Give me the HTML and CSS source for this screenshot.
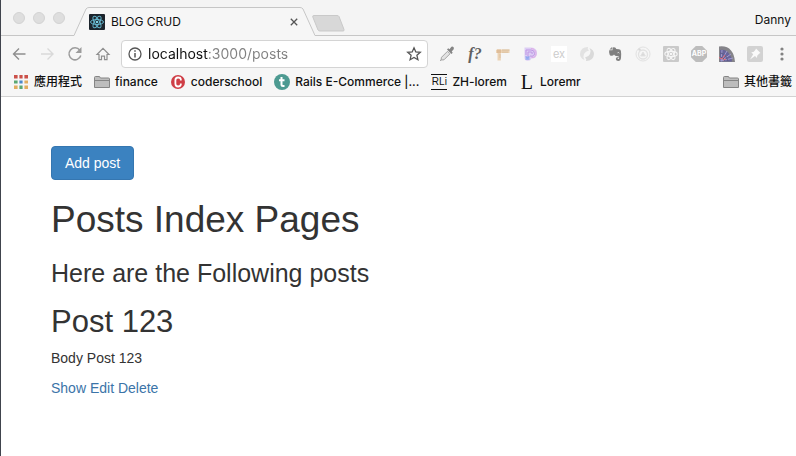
FILE: index.html
```html
<!DOCTYPE html>
<html lang="en">
<head>
<meta charset="utf-8">
<title>BLOG CRUD</title>
<link rel="stylesheet" href="styles.css">
</head>
<body>
<div class="window">
  <header class="chrome">
    <div class="tabstrip">
      <div class="lights"><span class="light"></span><span class="light"></span><span class="light"></span></div>
      <div class="tab">
        <svg class="tab-edge" width="15" height="29" viewBox="0 0 15 29"><path d="M0 28.5 12 2Q13 .5 15 .5V29H0z" fill="#f6f6f6"/><path d="M0 28.500 12 2Q13 .5 15 .5" fill="none" stroke="#c6c6c6"/></svg>
        <div class="tab-body">
          <svg width="16" height="16" viewBox="0 0 16 16"><rect width="16" height="16" rx="1" fill="#1c242c"/><g fill="none" stroke="#65b5cc"><ellipse cx="8" cy="8" rx="6.500" ry="2.500"/><ellipse cx="8" cy="8" rx="6.500" ry="2.500" transform="rotate(60 8 8)"/><ellipse cx="8" cy="8" rx="6.500" ry="2.500" transform="rotate(120 8 8)"/></g><circle cx="8" cy="8" r="1.300" fill="#7ad0e6"/></svg>
          <span class="tab-title">BLOG CRUD</span>
          <button class="tab-close" aria-label="Close tab"><svg width="8" height="8" viewBox="0 0 8 8"><path d="M.8.8l6.400 6.400M7.200.8.8 7.200" stroke="#555" stroke-width="1.300"/></svg></button>
        </div>
        <svg class="tab-edge" width="15" height="29" viewBox="0 0 15 29"><path d="M15 28.500 3 2Q2 .5 0 .5V29h15z" fill="#f6f6f6"/><path d="M15 28.500 3 2Q2 .5 0 .5" fill="none" stroke="#c6c6c6"/></svg>
      </div>
      <button class="new-tab" aria-label="New tab"><svg width="33" height="17" viewBox="0 0 33 17"><path d="M2 .5h23q1.500 0 2 1l5 13q.5 1.500-1 1.500H8q-1.500 0-2-1L.8 2Q.3.500 2 .5z" fill="#d8d8d8" stroke="#c9c9c9"/></svg></button>
      <button class="profile">Danny</button>
    </div>
    <div class="toolbar">
      <button class="tool" aria-label="Back"><svg width="16" height="16" viewBox="0 0 16 16"><path d="M14.500 8H2.500M8 2.500 2.500 8 8 13.500" fill="none" stroke="#8f8f8f" stroke-width="1.400"/></svg></button>
      <button class="tool" aria-label="Forward"><svg width="16" height="16" viewBox="0 0 16 16"><path d="M2 8h12M8.500 2.500 14 8l-5.500 5.500" fill="none" stroke="#d9d9d9" stroke-width="1.400"/></svg></button>
      <button class="tool" aria-label="Reload"><svg width="16" height="16" viewBox="0 0 16 16"><path d="M12.800 4.200A6 6 0 1 0 13.800 9.500" fill="none" stroke="#9c9c9c" stroke-width="1.500"/><path d="M14.500 1v6h-6z" fill="#9c9c9c"/></svg></button>
      <button class="tool" aria-label="Home"><svg width="16" height="16" viewBox="0 0 16 16"><path d="M2 8.500 8 2.300l6 6.200h-2v5.200H9.500v-3.500h-3v3.500H4V8.500z" fill="none" stroke="#8f8f8f" stroke-width="1.200"/></svg></button>
      <div class="omnibox">
        <svg width="14" height="14" viewBox="0 0 14 14"><circle cx="7" cy="7" r="6" fill="none" stroke="#555" stroke-width="1.300"/><path d="M7 6v4.500M7 3.300v1.500" stroke="#555" stroke-width="1.500"/></svg>
        <input class="url" type="text" aria-label="Address" value="localhost:3000/posts">
        <button class="star" aria-label="Bookmark this page"><svg width="16" height="16" viewBox="0 0 16 16"><path d="m8 1.800 1.800 4.100 4.500.4-3.400 3 1 4.400L8 11.400l-3.900 2.300 1-4.400-3.400-3 4.500-.4z" fill="none" stroke="#555" stroke-width="1.300"/></svg></button>
      </div>
      <div class="extensions">
        <button class="tool" aria-label="Color picker"><svg width="16" height="16" viewBox="0 0 16 16"><path d="M2 14 2.500 11.300l6-6 2.500 2.500-6 6z" fill="#e2e2e2" stroke="#a4a4a4"/><path d="M8 3.500 12.500 8l1.200-1.200-1-1.300 2-2.200Q15.500 1.500 14 .8 12.800.200 11.800 1.500L10.500 3.300 9.200 2.300z" fill="#858585"/><path d="M1 15l1.500-1.500" stroke="#aaa"/></svg></button>
        <button class="tool font-finder" aria-label="Font finder">f?</button>
        <button class="tool" aria-label="Ruler"><svg width="16" height="16" viewBox="0 0 16 16"><path d="M2 3.500h12.500V7H5.800v7.500H2.500V7H1V4z" fill="#ecd3b5"/><path d="M2 3.500h4V7H2z" fill="#dfbd99"/><path d="M7 4h7.500M8 7V5.500m2 1.500V5.500M12 7V5.500M5.800 9H4.300m1.500 2H4.300" stroke="#cfb18e" stroke-width=".7"/></svg></button>
        <button class="tool" aria-label="Pattern"><svg width="16" height="16" viewBox="0 0 16 16"><path d="M1.500 1.500h6Q14 1.500 14 7q0 5.500-5.500 5.500Q7.500 15 4.500 14.800 1.500 14.500 1.500 12z" fill="#dccdf4"/><path d="M3 9V4h5q3.500 0 3.500 3.500T7 10M5 11V6h3q2 0 1 2" fill="none" stroke="#bf97e4"/><path d="M8 2.500q5 .5 5 5T8.500 11.500" fill="none" stroke="#e0a9e4"/><path d="M2.500 10.500q2 2 4 0M2.500 13h4" stroke="#91aaf0" stroke-width="1.500" fill="none"/></svg></button>
        <button class="tool" aria-label="Express"><span class="ex">ex</span></button>
        <button class="tool" aria-label="Sync"><svg width="16" height="16" viewBox="0 0 16 16"><path d="M9 1Q1.500 1 1 8q0 4 4.500 6Q3.500 11 5 8t5-3.500Q8 3 9 1z" fill="#e2e2e2"/><path d="M7 15q7.500 0 8-7 0-4-4.500-6 2 3 .5 6t-5 3.500Q8 13 7 15z" fill="#dadada"/></svg></button>
        <button class="tool" aria-label="Evernote"><svg width="16" height="16" viewBox="0 0 16 16"><path d="M5.500 1.500v2.700H2.200Q1.800 6 2.600 8.500q.3 1.400 1.800 1.300Q6.500 9.800 7 8.500 8 10 9.500 10l1.500.2q1.300.3 1.200 1.800 0 1-.9 1-.8-.2-.7-1h1V11Q8.800 10.800 8.800 13q.2 2 2.500 2 2.400 0 2.700-3 .5-4-.1-7-.2-1.500-2-1.700L9.300 3Q9 1.200 7 1.200z" fill="#808080"/><path d="M2.500 3.500 4.900 1.100v2.400z" fill="#808080"/><path d="M10.600 6.800q1-.8 1.700.3" stroke="#eee" fill="none"/></svg></button>
        <button class="tool" aria-label="Ring"><svg width="16" height="16" viewBox="0 0 16 16"><g fill="none" stroke="#e2e2e2"><circle cx="8" cy="8" r="7"/><circle cx="8" cy="8.500" r="4.500" stroke-width="1.300"/><path d="m8 6 2.300 4H5.700z" fill="#dadada"/></g><circle cx="4.500" cy="3.500" r="1.200" fill="#d8d8d8"/></svg></button>
        <button class="tool" aria-label="React tools"><svg width="16" height="16" viewBox="0 0 16 16"><rect width="16" height="16" rx="1" fill="#cacaca"/><g fill="none" stroke="#f6f6f6" stroke-width="1.100"><ellipse cx="8" cy="8" rx="6.200" ry="2.600"/><ellipse cx="8" cy="8" rx="6.200" ry="2.600" transform="rotate(60 8 8)"/><ellipse cx="8" cy="8" rx="6.200" ry="2.600" transform="rotate(120 8 8)"/></g><circle cx="8" cy="8" r="1.300" fill="#f6f6f6"/></svg></button>
        <button class="tool" aria-label="Adblock"><span class="abp">ABP</span></button>
        <button class="tool" aria-label="Radar"><svg width="16" height="16" viewBox="0 0 16 16"><path d="M0 .5Q8-.5 12 4.500q3.500 4 4 11.500H0z" fill="#858489"/><path d="M1 4q6-1 9 3.500 3 3.500 3 8H1z" fill="#68649b"/><path d="M2 15 3 4m-1 11L8 5M2 15l10-7M2 15l12-3" stroke="#a09ccf"/><path d="M1 7q5 0 8 8M1 11q4 0 5 4" fill="none" stroke="#5d5b86"/><path d="M0 11.500 3 13l3-4M4 14l3-1" stroke="#e36b7b" fill="none"/></svg></button>
        <button class="tool" aria-label="Pin"><svg width="16" height="16" viewBox="0 0 16 16"><rect width="16" height="16" rx="2" fill="#d2d2d2"/><path d="m9 2.500 4.500 4.500-1.200.4-2.100 2.300-.2 2.300-2-2L3 13.500 6.200 8.200 4.200 6.200l2.300-.3 2-2.100z" fill="#fafafa"/></svg></button>
        <button class="tool menu" aria-label="Menu"><svg width="4" height="16" viewBox="0 0 4 16"><g fill="#828282"><circle cx="2" cy="3" r="1.600"/><circle cx="2" cy="8" r="1.600"/><circle cx="2" cy="13" r="1.600"/></g></svg></button>
      </div>
    </div>
    <nav class="bookmarks" aria-label="Bookmarks">
      <a href="#"><svg width="16" height="16" viewBox="0 0 16 16"><path d="M1 1h4v4H1zM6 1h4v4H6zM11 1h4v4h-4z" fill="#cb5049"/><path d="M1 6h4v4H1zM6 11h4v4H6z" fill="#5aa873"/><path d="M6 6h4v4H6z" fill="#4b88ca"/><path d="M1 11h4v4H1zM11 6h4v4h-4zM11 11h4v4h-4z" fill="#e1ad60"/><path d="M5.500 1v14M10.500 1v14M1 5.500h14M1 10.500h14" stroke="#f6f6f6" stroke-width="1.800"/></svg>應用程式</a>
      <a href="#"><svg width="16" height="16" viewBox="0 0 16 16"><path d="M.5 13.500v-10q0-1 1-1H5q1 0 1.200 1l.3.500h8q1 0 1 1v8.500z" fill="#bdbdbd" stroke="#858585"/><path d="M1 6.500h14" stroke="#858585"/></svg>finance</a>
      <a href="#"><svg width="16" height="16" viewBox="0 0 16 16"><circle cx="8" cy="8" r="7" fill="#cf3e46"/><path d="M10.800 6.500V5.200Q10.500 3.500 8 3.500q-2.600 0-2.600 2.700v3.600q0 2.700 2.600 2.700 2.500 0 2.800-1.800V9.500" stroke="#fff" stroke-width="1.800" fill="none"/></svg>coderschool</a>
      <a href="#"><svg width="16" height="16" viewBox="0 0 16 16"><circle cx="8" cy="8" r="8" fill="#4d9a91"/><path d="M7.500 3v7.500q0 1.500 1.500 1.500h1.500M5 6.200h5.500" stroke="#fff" stroke-width="2" fill="none"/></svg>Rails E-Commerce |...</a>
      <a href="#"><span class="rli">RLi</span>ZH-lorem</a>
      <a href="#"><span class="serif-l">L</span>Loremr</a>
      <a href="#" class="other"><svg width="16" height="16" viewBox="0 0 16 16"><path d="M.5 13.500v-10q0-1 1-1H5q1 0 1.200 1l.3.500h8q1 0 1 1v8.500z" fill="#bdbdbd" stroke="#858585"/><path d="M1 6.500h14" stroke="#858585"/></svg>其他書籤</a>
    </nav>
  </header>
  <main class="page">
    <button class="btn">Add post</button>
    <h1>Posts Index Pages</h1>
    <h3>Here are the Following posts</h3>
    <article>
      <h2>Post 123</h2>
      <p>Body Post 123</p>
      <p><a href="#">Show</a> <a href="#">Edit</a> <a href="#">Delete</a></p>
    </article>
  </main>
</div>
</body>
</html>
```
FILE: styles.css
```css
* { box-sizing: border-box; }
body {
  margin: 0;
  background: #fff;
  color: #333;
  font: 14px/20px "Liberation Sans", Arial, sans-serif;
}
button {
  border: 0;
  padding: 0;
  background: none;
  font: inherit;
  color: inherit;
}
svg { display: block; flex: none; }
.window { min-height: 100vh; border-left: 1px solid #40444d; }
.chrome {
  background: #f6f6f6;
  border-bottom: 1px solid #d2d2d2;
  color: #111;
  font: 12px/16px Inter, "Noto Sans CJK TC", sans-serif;
}
.tabstrip {
  display: flex;
  align-items: flex-end;
  height: 36px;
  background: linear-gradient(#c6c6c6, #c6c6c6) left bottom / 100% 1px no-repeat #f4f4f4;
}
.lights { display: flex; gap: 8px; padding: 0 4px 12px 12px; }
.light {
  width: 12px;
  height: 12px;
  border-radius: 50%;
  background: #dedede;
  border: 1px solid #d3d3d3;
}
.tab { display: flex; margin-left: 5px; }
.tab-body {
  display: flex;
  align-items: center;
  width: 211px;
  height: 29px;
  border-top: 1px solid #c6c6c6;
  background: #f6f6f6;
}
.tab-title { flex: 1; margin-left: 6px; }
.tab-close { padding: 2px; }
.new-tab { margin: 0 0 4px -3px; }
.profile { margin: 0 5px 8px auto; }
.toolbar { display: flex; align-items: center; padding: 4px 1px 0 4px; }
.tool {
  display: flex;
  align-items: center;
  justify-content: center;
  width: 28px;
  height: 28px;
}
.omnibox {
  display: flex;
  align-items: center;
  flex: 1;
  min-width: 0;
  height: 28px;
  margin: 0 5px 0 4px;
  padding: 0 5px 0 6px;
  background: #fff;
  border: 1px solid #d4d4d4;
  border-radius: 4px;
}
.url {
  flex: 1;
  min-width: 0;
  margin-left: 6px;
  padding: 0;
  border: 0;
  outline: 0;
  font: 14px/20px Inter, sans-serif;
  color: transparent;
  background: linear-gradient(90deg, #111 60px, #808080 60px);
  -webkit-background-clip: text;
  background-clip: text;
}
.extensions { display: flex; }
.menu { width: 26px; }
.font-finder { font: italic 700 16px/20px "Liberation Serif", serif; color: #606060; }
.ex {
  width: 16px;
  background: #fff;
  color: #ccc;
  font-size: 11px;
  text-align: center;
}
.abp {
  width: 16px;
  background: #bdbdbd;
  color: #fff;
  font-size: 7px;
  font-weight: 700;
  text-align: center;
  clip-path: polygon(30% 0, 70% 0, 100% 30%, 100% 70%, 70% 100%, 30% 100%, 0 70%, 0 30%);
}
.bookmarks {
  display: flex;
  align-items: center;
  gap: 12px;
  height: 28px;
  padding: 0 4px 0 12px;
  font-weight: 500;
}
.bookmarks a {
  display: flex;
  align-items: center;
  gap: 5px;
  color: #111;
  text-decoration: none;
  white-space: nowrap;
}
.bookmarks .other { margin-left: auto; }
.rli {
  width: 16px;
  border: solid #111;
  border-width: 1px 0;
  font: 10px/14px "Liberation Sans", sans-serif;
  text-align: center;
}
.serif-l { width: 16px; font: 20px/16px "Liberation Serif", serif; text-align: center; }
.page { padding: 49px 50px; }
.btn {
  display: block;
  padding: 6px 13px;
  background: #3b82c0;
  border: 1px solid #3576b0;
  border-radius: 4px;
  color: #fff;
}
h1, h2, h3 { font-weight: 400; margin: 20px 0 10px; }
h1 { font-size: 37px; line-height: 40px; }
h2 { font-size: 31px; line-height: 32px; }
h3 { font-size: 25px; line-height: 26px; }
p { margin: 0 0 10px; }
.page a { color: #3b74a8; text-decoration: none; }
```
